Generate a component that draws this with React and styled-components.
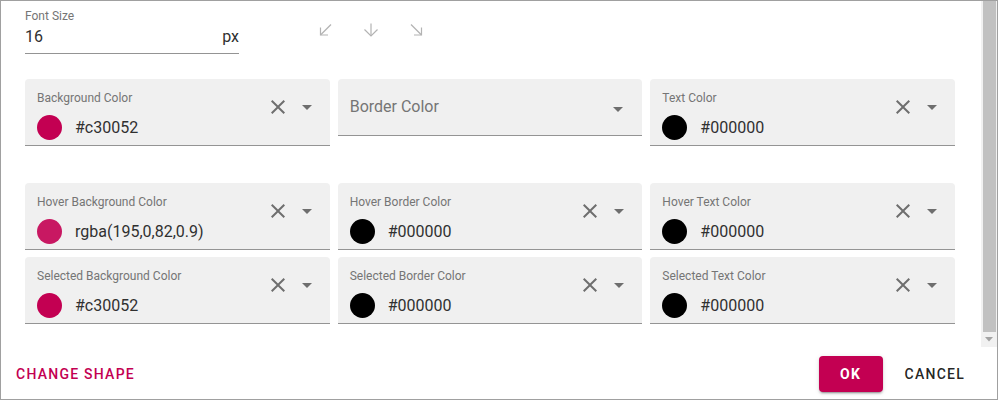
import React from "react";
import styled, { createGlobalStyle } from "styled-components";

const GlobalStyle = createGlobalStyle`
  body {
    margin: 0;
    background: #fff;
    font-family: Roboto, "Liberation Sans", sans-serif;
  }
`;

const Frame = styled.div`
  width: 998px;
  height: 400px;
  box-sizing: border-box;
  border: 1px solid #a0a0a0;
  display: flex;
  flex-direction: column;
  background: #fff;
`;

const Scroller = styled.div`
  flex: none;
  height: 346px;
  display: flex;
  overflow: hidden;
`;

const Content = styled.div`
  flex: 1;
  min-width: 0;
  display: flex;
  flex-direction: column;
  padding: 7px 26px 0 24px;
`;

// drawn scrollbar: the page is shown with its scrollbar, headless view hides native ones
const ScrollTrack = styled.div`
  flex: none;
  width: 16px;
  display: flex;
  flex-direction: column;
  background: #f1f1f1;
`;

const ScrollThumb = styled.div`
  flex: 1;
  margin: 0 1px 0 2px;
  background: #c1c1c1;
`;

const ScrollArrow = styled.div`
  flex: none;
  height: 15px;
  display: flex;
  align-items: center;
  justify-content: center;
  color: #a3a3a3;
`;

const TopRow = styled.div`
  display: flex;
  align-items: flex-start;
  margin-bottom: 25px;
`;

const SizeField = styled.div`
  width: 214px;
  padding-bottom: 4px;
  border-bottom: 1px solid #949494;
`;

const SmallLabel = styled.div`
  font-size: 12px;
  line-height: 16px;
  color: #757575;
  white-space: nowrap;
`;

const SizeInput = styled.div`
  display: flex;
  justify-content: space-between;
  margin-top: 1px;
  font-size: 16px;
  line-height: 24px;
  color: #303030;
`;

const Arrows = styled.div`
  display: flex;
  margin-left: 64px;
  margin-top: 10px;
`;

const ArrowBtn = styled.span`
  width: 45px;
  height: 24px;
  display: flex;
  align-items: center;
  justify-content: center;
  color: #b3b3b3;
`;

const Grid = styled.div`
  display: grid;
  grid-template-columns: repeat(3, 1fr);
  column-gap: 8px;
  row-gap: 7px;
  align-items: start;
  margin-top: ${(p) => p.$top || 0}px;
`;

const Field = styled.div`
  display: flex;
  background: #f0f0f0;
  border-radius: 4px 4px 0 0;
  border-bottom: 1px solid #949494;
  padding: 0 ${(p) => (p.$empty ? 12 : 11)}px 0 12px;
`;

const FieldMain = styled.div`
  flex: 1;
  min-width: 0;
  padding: 11px 0 5px;
`;

const Placeholder = styled.div`
  flex: 1;
  padding: 16px 0 16px;
  font-size: 16px;
  line-height: 24px;
  color: #757575;
`;

const ValueRow = styled.div`
  display: flex;
  align-items: center;
  gap: 13px;
  height: 25px;
  margin-top: 9px;
  font-size: 16px;
  color: #303030;
  white-space: nowrap;
`;

const Swatch = styled.span`
  flex: none;
  width: 25px;
  height: 25px;
  border-radius: 50%;
  background: ${(p) => p.$color};
`;

const Adornment = styled.div`
  display: flex;
  gap: 5px;
  margin-top: ${(p) => p.$top}px;
  color: rgba(0, 0, 0, 0.54);
`;

const Actions = styled.div`
  flex: 1;
  display: flex;
  align-items: flex-start;
  padding: 9px 24px 0 7px;
`;

const TextButton = styled.span`
  height: 36px;
  padding: 0 8px;
  display: flex;
  align-items: center;
  font-size: 14px;
  font-weight: 500;
  letter-spacing: 1.25px;
  text-transform: uppercase;
  color: ${(p) => p.$color};
`;

const OkButton = styled.span`
  margin-left: auto;
  margin-right: 14px;
  width: 64px;
  height: 36px;
  border-radius: 4px;
  display: flex;
  align-items: center;
  justify-content: center;
  background: #c30052;
  color: #fff;
  font-size: 14px;
  font-weight: 700;
  letter-spacing: 1.25px;
  box-shadow: 0 3px 1px -2px rgba(0, 0, 0, 0.2), 0 2px 2px 0 rgba(0, 0, 0, 0.14),
    0 1px 5px 0 rgba(0, 0, 0, 0.12);
`;

const CloseIcon = () => (
  <svg width="24" height="24" viewBox="0 0 24 24" fill="currentColor">
    <path d="M19 6.41L17.59 5 12 10.59 6.41 5 5 6.41 10.59 12 5 17.59 6.41 19 12 13.41 17.59 19 19 17.59 13.41 12z" />
  </svg>
);

const DropIcon = () => (
  <svg width="24" height="24" viewBox="0 0 24 24" fill="currentColor">
    <path d="M7 10l5 5 5-5z" />
  </svg>
);

const Arrow = ({ dir }) => (
  <svg width="16" height="14" viewBox="0 0 16 14" fill="none" stroke="currentColor" strokeWidth="1.2">
    {dir === "sw" && (
      <>
        <path d="M13 1.5L2.5 12" />
        <path d="M2.5 4.5V12H10" />
      </>
    )}
    {dir === "s" && (
      <>
        <path d="M8 0.5V13" />
        <path d="M1.5 6.5L8 13l6.5-6.5" />
      </>
    )}
    {dir === "se" && (
      <>
        <path d="M3 1.5L13.5 12" />
        <path d="M13.5 4.5V12H6" />
      </>
    )}
  </svg>
);

const ColorField = ({ label, value, color }) => {
  if (!value) {
    return (
      <Field $empty>
        <Placeholder>{label}</Placeholder>
        <Adornment $top={18}>
          <DropIcon />
        </Adornment>
      </Field>
    );
  }
  return (
    <Field>
      <FieldMain>
        <SmallLabel>{label}</SmallLabel>
        <ValueRow>
          <Swatch $color={color || value} />
          {value}
        </ValueRow>
      </FieldMain>
      <Adornment $top={16}>
        <CloseIcon />
        <DropIcon />
      </Adornment>
    </Field>
  );
};

const mainRow = [
  { label: "Background Color", value: "#c30052" },
  { label: "Border Color" },
  { label: "Text Color", value: "#000000" },
];

const stateRows = [
  { label: "Hover Background Color", value: "rgba(195,0,82,0.9)" },
  { label: "Hover Border Color", value: "#000000" },
  { label: "Hover Text Color", value: "#000000" },
  { label: "Selected Background Color", value: "#c30052" },
  { label: "Selected Border Color", value: "#000000" },
  { label: "Selected Text Color", value: "#000000" },
];

export default function App() {
  return (
    <>
      <GlobalStyle />
      <Frame>
        <Scroller>
          <Content>
            <TopRow>
              <SizeField>
                <SmallLabel>Font Size</SmallLabel>
                <SizeInput>
                  <span>16</span>
                  <span>px</span>
                </SizeInput>
              </SizeField>
              <Arrows>
                <ArrowBtn>
                  <Arrow dir="sw" />
                </ArrowBtn>
                <ArrowBtn>
                  <Arrow dir="s" />
                </ArrowBtn>
                <ArrowBtn>
                  <Arrow dir="se" />
                </ArrowBtn>
              </Arrows>
            </TopRow>
            <Grid>
              {mainRow.map((f) => (
                <ColorField key={f.label} {...f} />
              ))}
            </Grid>
            <Grid $top={37}>
              {stateRows.map((f) => (
                <ColorField key={f.label} {...f} />
              ))}
            </Grid>
          </Content>
          <ScrollTrack>
            <ScrollThumb />
            <ScrollArrow>
              <svg width="8" height="5" viewBox="0 0 8 5" fill="currentColor">
                <path d="M0 0h8L4 4.5z" />
              </svg>
            </ScrollArrow>
          </ScrollTrack>
        </Scroller>
        <Actions>
          <TextButton $color="#c30052">Change shape</TextButton>
          <OkButton>OK</OkButton>
          <TextButton $color="rgba(0,0,0,0.87)">Cancel</TextButton>
        </Actions>
      </Frame>
    </>
  );
}
